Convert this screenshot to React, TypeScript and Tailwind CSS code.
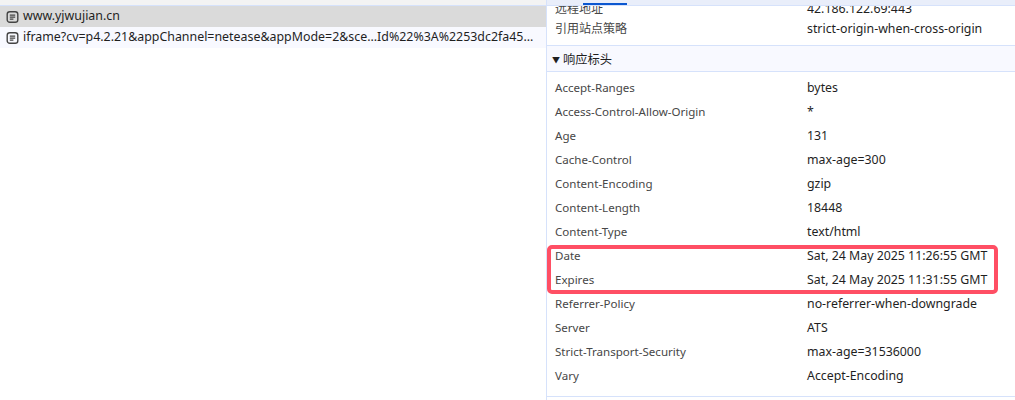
import React from 'react';

const headers = [
  ['Accept-Ranges', 'bytes'],
  ['Access-Control-Allow-Origin', '*'],
  ['Age', '131'],
  ['Cache-Control', 'max-age=300'],
  ['Content-Encoding', 'gzip'],
  ['Content-Length', '18448'],
  ['Content-Type', 'text/html'],
  ['Date', 'Sat, 24 May 2025 11:26:55 GMT'],
  ['Expires', 'Sat, 24 May 2025 11:31:55 GMT'],
  ['Referrer-Policy', 'no-referrer-when-downgrade'],
  ['Server', 'ATS'],
  ['Strict-Transport-Security', 'max-age=31536000'],
  ['Vary', 'Accept-Encoding'],
];

const DocIcon = () => (
  <svg width="14" height="14" viewBox="0 0 14 14" fill="none" className="shrink-0">
    <rect x="1.2" y="1.7" width="10.6" height="10.6" rx="2.6" stroke="#444" strokeWidth="1.4" />
    <path d="M3.8 5.1h5.4M3.8 7.1h5.4M3.8 9.1h3.6" stroke="#444" strokeWidth="1.1" />
  </svg>
);

const Row = ({ name, value, h = 'h-6', nameSize = 'text-[11.55px]' }: { name: string; value: string; h?: string; nameSize?: string }) => (
  <div className={`flex items-center pl-2 ${h}`}>
    <div className={`w-[252px] shrink-0 text-[#474747] ${nameSize}`}>{name}</div>
    <div className="text-[12.35px] text-[#1f1f1f] whitespace-nowrap">{value}</div>
  </div>
);

export default function App() {
  return (
    <div className="relative flex w-[1015px] h-[400px] overflow-hidden bg-white text-[12px] font-['Noto_Sans','Noto_Sans_CJK_SC',sans-serif]">
      <div className="w-[546px] shrink-0">
        <div className="h-[6px] bg-[#f3f3f3] border-b border-[#d6e2fb]" />
        <div className="flex items-center gap-[3px] pl-[6px] h-[21px] bg-[#dadada] text-[12.4px] text-[#1f1f1f]">
          <DocIcon />
          <span>www.yjwujian.cn</span>
        </div>
        <div className="flex items-center gap-[3px] pl-[6px] h-[21px] bg-[#f8f9ff] text-[12.4px] text-[#1f1f1f]">
          <DocIcon />
          <span className="whitespace-nowrap">iframe?cv=p4.2.21&amp;appChannel=netease&amp;appMode=2&amp;sce...Id%22%3A%2253dc2fa45...</span>
        </div>
      </div>

      <div className="relative flex-1 border-l border-[#d6e2fb] overflow-hidden">
        <div className="absolute top-0 left-0 right-0 h-[6px] bg-[#e9eefa] border-b border-[#d6e2fb]">
          <div className="absolute left-[36px] top-[3px] w-[44px] h-[2px] bg-[#0b57d0]" />
        </div>
        <div className="mt-[-1px]">
          <Row name="远程地址" value="42.186.122.69:443" h="h-5" nameSize="text-[12px]" />
          <Row name="引用站点策略" value="strict-origin-when-cross-origin" h="h-5" nameSize="text-[12px]" />
        </div>
        <div className="mt-[6px] flex items-center gap-[3px] pl-[5px] pt-[3px] h-[27px] bg-[#f8f9ff] border-y border-[#d6e2fb] text-[#1f1f1f]">
          <span className="text-[8px]">▼</span>
          <span className="text-[12.25px]">响应标头</span>
        </div>
        <div className="mt-[4px] pb-[8px] border-b border-[#d6e2fb]">
          {headers.map(([name, value]) => (
            <Row key={name} name={name} value={value} />
          ))}
        </div>
      </div>

      <div className="absolute left-[547px] top-[245px] w-[451px] h-[49px] border-4 border-[#ff4f64] rounded-[5px]" />
    </div>
  );
}
